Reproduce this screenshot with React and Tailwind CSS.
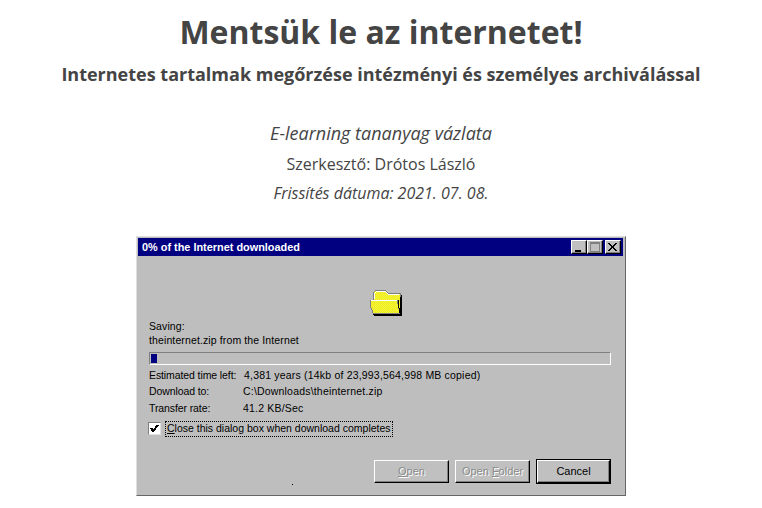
const raised = "border border-t-white border-l-white border-r-black border-b-black shadow-[inset_-1px_-1px_0_#808080]";

function TitleButton({ children, className = "" }) {
  return (
    <div className={`w-[16px] h-[14px] bg-[#c0c0c0] flex items-center justify-center relative ${raised} ${className}`}>
      {children}
    </div>
  );
}

function Folder() {
  return (
    <svg width="34" height="28" viewBox="0 0 34 28" shapeRendering="crispEdges">
      <defs>
        <pattern id="dith" width="2" height="2" patternUnits="userSpaceOnUse" patternTransform="translate(1 0)">
          <rect width="2" height="2" fill="#ffff00" />
          <rect width="1" height="1" fill="#e4e450" />
          <rect x="1" y="1" width="1" height="1" fill="#e4e450" />
        </pattern>
      </defs>
      <path d="M5 26 H33 V5 H20 L17 2 H7 L4 5 V11 H5 Z" fill="#000" transform="translate(0,1)" />
      <path d="M4 10 V4 L7 1 H16 L19 4 H31 V24 H6 Z" fill="url(#dith)" stroke="#808080" />
      <path d="M5 10 V5 L8 2 H16 L19 5 H30" fill="none" stroke="#fff" />
      <path d="M1 11 H28 L31 24 H4 L1 16 Z" fill="url(#dith)" stroke="#808080" />
      <path d="M2 11 H28" fill="none" stroke="#fff" />
      <path d="M29 11 V14 L31 24 M31 8 V26" fill="none" stroke="#000" />
      <path d="M4 25 H32" fill="none" stroke="#000" />
    </svg>
  );
}

function Row({ label, value, shift = "" }) {
  return (
    <div className="flex h-[16.5px] items-center whitespace-nowrap">
      <span className="w-[94px] shrink-0 tracking-[-0.1px]">{label}</span>
      <span className={`tracking-[0.19px] ${shift}`}>{value}</span>
    </div>
  );
}

function Button({ children, disabled, def }) {
  return (
    <div
      className={`h-[23px] flex items-center justify-center bg-[#c0c0c0] text-[11px] ${raised} ${
        def ? "outline outline-1 outline-black text-black w-[73px] mx-px" : "w-[75px]"
      } ${disabled ? "text-[#8a8a8a] [text-shadow:1px_1px_0_#fff]" : ""}`}
    >
      {children}
    </div>
  );
}

export default function App() {
  return (
    <div className="w-[762px] h-[508px] bg-white overflow-hidden flex flex-col items-center text-[#444] font-['Open_Sans',sans-serif]">
      <h1 className="text-[32px] leading-[44px] font-bold mt-[10px]">Mentsük le az internetet!</h1>
      <h2 className="text-[18px] leading-[25px] font-bold mt-[8px]">
        Internetes tartalmak megőrzése intézményi és személyes archiválással
      </h2>
      <p className="text-[18px] leading-[25px] italic mt-[34px]">E-learning tananyag vázlata</p>
      <p className="text-[16px] leading-[22px] mt-[7px]">Szerkesztő: Drótos László</p>
      <p className="text-[16px] leading-[22px] italic mt-[7px]">Frissítés dátuma: 2021. 07. 08.</p>

      <div className="relative mt-[32px] w-[490px] h-[260px] shrink-0 bg-[#bebebe] p-[2px] border border-t-[#dfdfdf] border-l-[#dfdfdf] border-r-[#666] border-b-[#666] font-['Liberation_Sans',sans-serif] text-[10.5px] leading-[13px] text-black flex flex-col">
        <div className="h-[18px] -mt-px -ml-px mr-0 bg-[#000080] flex items-center justify-between pl-[4px] pr-[2px] shrink-0">
          <span className="text-white font-bold text-[10.9px]">0% of the Internet downloaded</span>
          <div className="flex items-center">
            <TitleButton>
              <div className="absolute left-[3px] bottom-[1px] w-[6px] h-[2px] bg-black" />
            </TitleButton>
            <TitleButton>
              <div className="w-[10px] h-[10px] border border-[#808080] border-t-2" />
            </TitleButton>
            <TitleButton className="ml-[2px]">
              <svg width="10" height="9" viewBox="0 0 10 9" shapeRendering="crispEdges">
                <path d="M1 0 L9 8 M9 0 L1 8 M0 0 L8 8 M8 0 L0 8" stroke="#000" fill="none" />
              </svg>
            </TitleButton>
          </div>
        </div>

        <div className="flex justify-center mt-[33px] ml-[10px] h-[28px] shrink-0">
          <Folder />
        </div>

        <div className="pl-[10px] pr-[12px] mt-[3px] flex flex-col flex-1">
          <div className="h-[14px] tracking-[0.1px]">Saving:</div>
          <div className="h-[14px] tracking-[0.12px] whitespace-nowrap">theinternet.zip from the Internet</div>
          <div className="h-[13px] mt-[4px] border border-t-[#808080] border-l-[#808080] border-r-white border-b-white p-px">
            <div className="w-[6px] h-full bg-[#000080]" />
          </div>
          <div className="mt-[2px] flex flex-col">
            <Row label="Estimated time left:" value="4,381 years (14kb of 23,993,564,998 MB copied)" shift="ml-[1px]" />
            <Row label="Download to:" value="C:\Downloads\theinternet.zip" />
            <Row label="Transfer rate:" value="41.2 KB/Sec" />
          </div>
          <div className="flex items-center mt-[4px] -ml-[1px] h-[16px]">
            <div className="w-[13px] h-[13px] bg-white border border-t-[#808080] border-l-[#808080] border-r-[#dfdfdf] border-b-[#dfdfdf] flex items-center justify-center">
              <svg width="9" height="9" viewBox="0 0 9 9" shapeRendering="crispEdges">
                <path d="M1 4 L3 7 L8 1" stroke="#000" strokeWidth="2" fill="none" />
              </svg>
            </div>
            <span className="ml-[4px] border border-dotted border-black px-px h-[16px] flex items-center whitespace-nowrap">
              <span><u>C</u>lose this dialog box when download completes</span>
            </span>
          </div>
          <div className="flex justify-end gap-[6px] mt-[23px]">
            <Button disabled><span><u>O</u>pen</span></Button>
            <Button disabled><span>Open <u>F</u>older</span></Button>
            <Button def>Cancel</Button>
          </div>
        </div>
        <div className="absolute left-[155px] top-[247px] w-px h-px bg-black" />
      </div>
    </div>
  );
}
